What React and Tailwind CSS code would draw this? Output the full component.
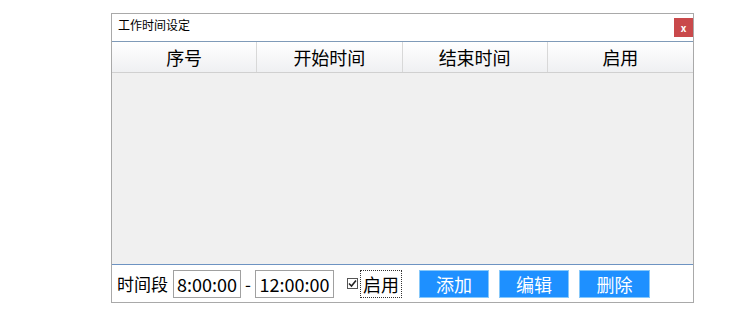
const cols = ["序号", "开始时间", "结束时间", "启用"];

const App = () => {
  return (
    <div className="w-[750px] h-[324px] bg-white font-['Noto_Sans_CJK_SC',sans-serif] text-black">
      <div className="ml-[111px] pt-[13px]">
        <div className="w-[583px] h-[290px] border border-[#a9a9a9] flex flex-col">
          {/* title bar */}
          <div className="h-[28px] flex justify-between border-b border-[#7f9ab8] shrink-0">
            <span className="pl-[6px] pt-[5px] text-[12px] leading-none">工作时间设定</span>
            <div className="w-[19px] h-[19px] bg-[#c9494b] text-white text-[10px] font-bold leading-none flex items-center justify-center mt-[4px]">
              x
            </div>
          </div>

          {/* header */}
          <div className="grid grid-cols-4 h-[31px] border-b border-[#d0d0d0] bg-gradient-to-b from-white to-[#eff0f2] shrink-0">
            {cols.map((c, i) => (
              <div
                key={c}
                className={`flex items-center justify-center text-[18px] leading-none ${i < 3 ? "border-r border-[#d8d8d8]" : ""}`}
              >
                {c}
              </div>
            ))}
          </div>

          {/* table body */}
          <div className="flex-1 bg-[#f0f0f0] border-b border-[#6d93c2]"></div>

          {/* bottom bar */}
          <div className="h-[37px] flex items-center pl-[5px] text-[17px] leading-none shrink-0">
            <span className="w-[51px] shrink-0">时间段</span>
            <div className="ml-[5px] w-[68px] h-[28px] border border-[#a0a0a0] flex items-center justify-center text-[18px]">8:00:00</div>
            <span className="w-[14px] text-center">-</span>
            <div className="w-[79px] h-[28px] border border-[#a0a0a0] flex items-center justify-center text-[18px]">12:00:00</div>
            <div className="ml-[13px] w-[11px] h-[11px] border border-[#555] bg-white flex items-center justify-center">
              <svg width="9" height="9" viewBox="0 0 9 9">
                <path d="M1 4.5 L3.5 7 L8 1.5" fill="none" stroke="#222" strokeWidth="1.6" />
              </svg>
            </div>
            <div className="ml-[2px] w-[42px] h-[28px] border border-dotted border-[#333] flex items-center justify-center text-[18px]">启用</div>
            <button className="ml-[17px] w-[70px] h-[28px] bg-[#1e90ff] border border-[#87c8fa] text-white text-[18px] flex items-center justify-center">添加</button>
            <button className="ml-[10px] w-[70px] h-[28px] bg-[#1e90ff] border border-[#87c8fa] text-white text-[18px] flex items-center justify-center">编辑</button>
            <button className="ml-[10px] w-[71px] h-[28px] bg-[#1e90ff] border border-[#87c8fa] text-white text-[18px] flex items-center justify-center">删除</button>
          </div>
        </div>
      </div>
    </div>
  );
};

export default App;
